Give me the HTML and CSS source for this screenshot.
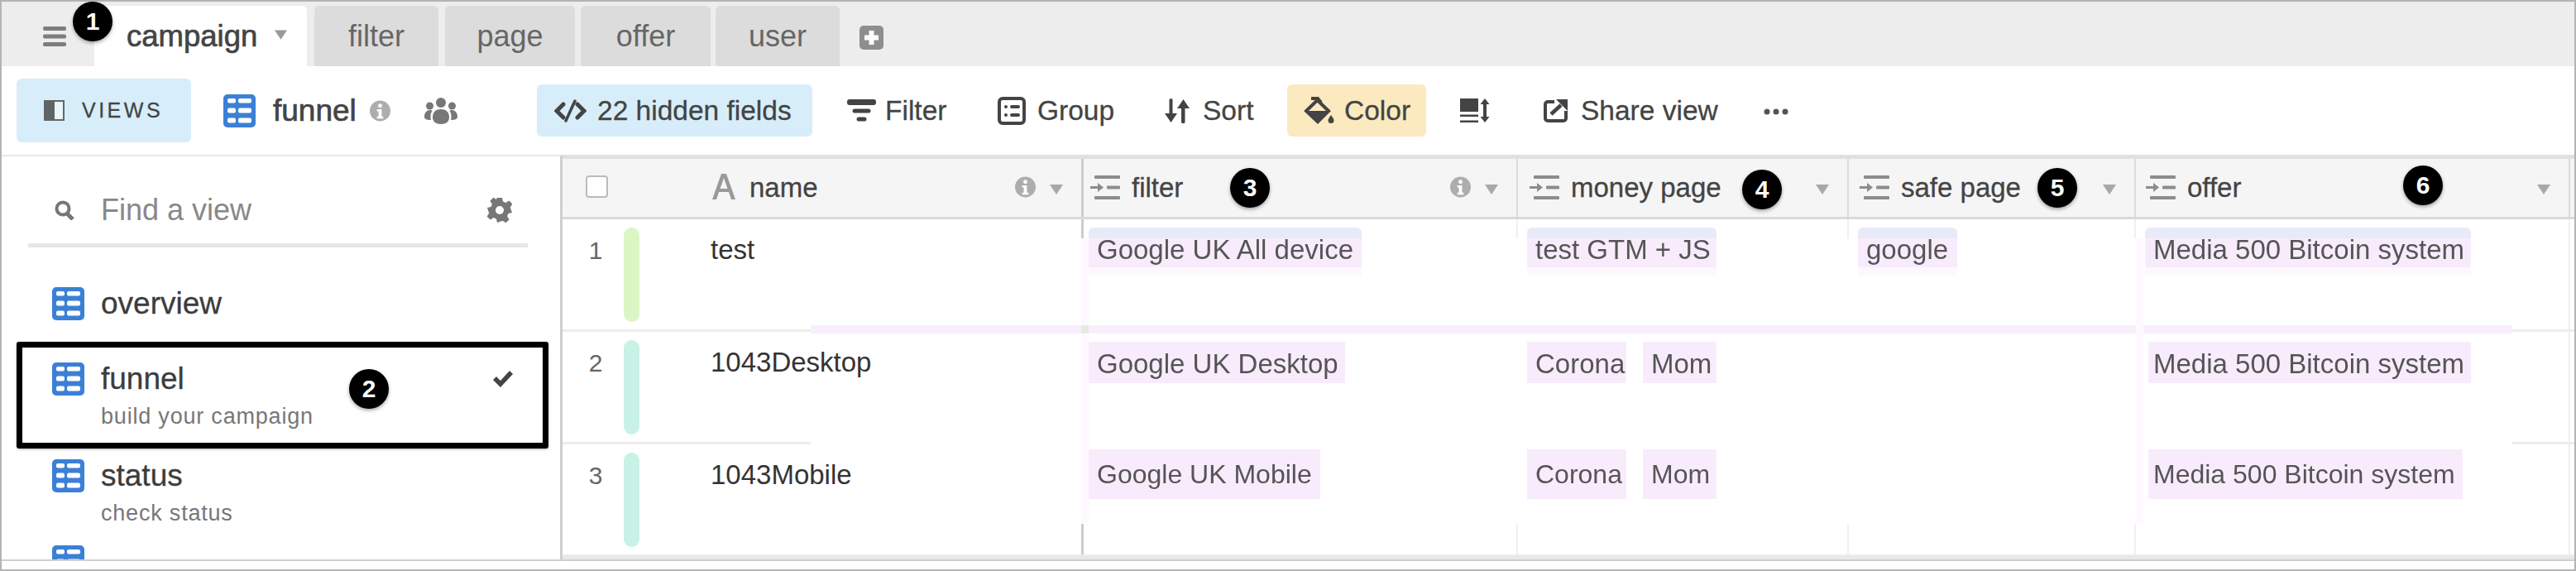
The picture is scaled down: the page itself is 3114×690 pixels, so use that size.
FILE: index.html
```html
<!DOCTYPE html>
<html lang="en">
<head>
    <meta charset="UTF-8">
    <meta name="viewport" content="width=device-width, initial-scale=1.0">
    <title>Campaign funnel</title>
    <link rel="stylesheet" href="styles.css">
</head>
<body>

<svg class="defs" width="0" height="0">
    <symbol id="grid" viewBox="0 0 39 40">
        <rect width="39" height="40" rx="5" fill="#3b80d6"/>
        <g fill="#fff">
            <rect x="5" y="5" width="10" height="5.500" rx="2"/><rect x="18" y="5" width="16" height="5.500" rx="2"/>
            <rect x="5" y="16.500" width="10" height="6" rx="2"/><rect x="18" y="16.500" width="16" height="6" rx="2"/>
            <rect x="5" y="28.500" width="10" height="6" rx="2"/><rect x="18" y="28.500" width="16" height="6" rx="2"/>
        </g>
    </symbol>
    <symbol id="lookup" viewBox="0 0 36 29">
        <g fill="#8c8c8c">
            <rect x="5" y="0" width="31" height="4" rx="1"/>
            <rect x="20" y="12.500" width="16" height="4" rx="1"/>
            <rect x="5" y="25" width="31" height="4" rx="1"/>
            <path d="M0 13h9V9l7 5.500-7 5.500v-4H0z"/>
        </g>
    </symbol>
    <symbol id="info" viewBox="0 0 26 26">
        <circle cx="13" cy="13" r="13" fill="#adadad"/>
        <circle cx="13" cy="6.500" r="2.500" fill="#fff"/>
        <path d="M9 11h6v9h2v2.500H9V20h2v-6.500H9z" fill="#fff"/>
    </symbol>
    <symbol id="caret" viewBox="0 0 16 12">
        <path d="M0 0h16L8 12z" fill="#a8a8a8"/>
    </symbol>
</svg>

<div class="window">

    <div class="tabbar">
        <svg class="menu-icon" viewBox="0 0 28 24">
            <rect y="0" width="28" height="5" rx="2"/><rect y="9.500" width="28" height="5" rx="2"/><rect y="19" width="28" height="5" rx="2"/>
        </svg>
        <div class="tab tab-active">campaign
            <svg class="tab-caret" viewBox="0 0 16 12"><path d="M0 0h16L8 12z"/></svg>
        </div>
        <div class="tab tab-filter">filter</div>
        <div class="tab tab-page">page</div>
        <div class="tab tab-offer">offer</div>
        <div class="tab tab-user">user</div>
        <div class="add-tab">
            <svg viewBox="0 0 29 29"><path d="M11.500 6h6v5.500H23v6h-5.500V23h-6v-5.500H6v-6h5.500z" fill="#fff"/></svg>
        </div>
        <span class="badge badge-1">1</span>
    </div>

    <div class="toolbar">
        <div class="views-btn">
            <svg class="views-icon" viewBox="0 0 25 25">
                <rect x="1" y="1" width="23" height="23" fill="#e8f5fc" stroke="#666" stroke-width="2"/>
                <rect x="1" y="1" width="12" height="23" fill="#5f6466"/>
            </svg>
            VIEWS
        </div>
        <svg class="view-icon"><use href="#grid"/></svg>
        <span class="view-name">funnel</span>
        <svg class="view-info"><use href="#info"/></svg>
        <svg class="people-icon" viewBox="0 0 40 32" fill="#777">
            <circle cx="20" cy="6" r="6"/><circle cx="6.500" cy="10" r="4.500"/><circle cx="33.500" cy="10" r="4.500"/>
            <path d="M10 24c0-7 4-10 10-10s10 3 10 10c0 5-4 8-10 8s-10-3-10-8z"/>
            <path d="M0 23c0-5 3-8 7-8 1 0 2 0 2.500 1-1.500 2-2 4-2 8 0 1 0 2 .5 3-5 0-8-1-8-4zM40 23c0-5-3-8-7-8-1 0-2 0-2.500 1 1.500 2 2 4 2 8 0 1 0 2-.5 3 5 0 8-1 8-4z"/>
        </svg>

        <div class="tool tool-hidden">
            <svg class="tool-icon icon-code" viewBox="0 0 39 28" fill="none" stroke="#444" stroke-width="5" stroke-linecap="round">
                <path d="M11 6l-8 8 8 8M28 6l8 8-8 8"/>
                <path d="M25 2L14 26" stroke-width="3.500"/>
            </svg>
            22 hidden fields
        </div>
        <div class="tool tool-filter">
            <svg class="tool-icon icon-filter" viewBox="0 0 35 27" fill="#444">
                <rect width="35" height="7" rx="3"/><rect x="6.500" y="11.500" width="22" height="5" rx="2.500"/><rect x="11.500" y="21.500" width="12" height="5" rx="2.500"/>
            </svg>
            Filter
        </div>
        <div class="tool tool-group">
            <svg class="tool-icon icon-group" viewBox="0 0 34 34">
                <rect x="2" y="2" width="30" height="30" rx="4" fill="none" stroke="#444" stroke-width="4"/>
                <g fill="#444"><circle cx="10" cy="12" r="2"/><rect x="15" y="10" width="12" height="4" rx="2"/><circle cx="10" cy="22" r="2"/><rect x="15" y="20" width="12" height="4" rx="2"/></g>
            </svg>
            Group
        </div>
        <div class="tool tool-sort">
            <svg class="tool-icon icon-sort" viewBox="0 0 30 30" fill="#444">
                <path d="M5.500 2a2 2 0 0 1 4 0v16h5.500L7.500 29 0 18h5.500z"/>
                <path d="M20 12h-5L22.500 1 30 12h-5.500v16a2.200 2.200 0 0 1-4.500 0z"/>
            </svg>
            Sort
        </div>
        <div class="tool tool-color">
            <svg class="tool-icon icon-color" viewBox="0 0 37 33">
                <path d="M0 17h33L17 33z" fill="#444"/>
                <path d="M2 18L16.500 4 31 18" fill="none" stroke="#444" stroke-width="4"/>
                <path d="M9 2h8l4 5" fill="none" stroke="#444" stroke-width="4"/>
                <path d="M33 22c2 3 3.500 4.500 3.500 6.500a3.500 3.500 0 0 1-7 0c0-2 1.500-3.500 3.500-6.500z" fill="#444"/>
            </svg>
            Color
        </div>
        <svg class="icon-height" viewBox="0 0 36 29" fill="#444">
            <rect width="22" height="16"/><rect y="19.500" width="22" height="2.500"/><rect y="26.500" width="22" height="2.500"/>
            <path d="M30 0l5.500 7H32v15h3.500L30 29l-5.500-7H28V7h-3.500z"/>
        </svg>
        <div class="tool tool-share">
            <svg class="tool-icon icon-share" viewBox="0 0 29 28">
                <path d="M13 3H5a3 3 0 0 0-3 3v17a3 3 0 0 0 3 3h19a3 3 0 0 0 3-3v-9" fill="none" stroke="#444" stroke-width="4"/>
                <path d="M15 0h14v14z" fill="#444"/>
                <path d="M9 18L21 7" stroke="#444" stroke-width="4.500"/>
            </svg>
            Share view
        </div>
        <svg class="icon-dots" viewBox="0 0 30 10" fill="#555">
            <circle cx="4" cy="5" r="3.500"/><circle cx="15" cy="5" r="3.500"/><circle cx="26" cy="5" r="3.500"/>
        </svg>
    </div>

    <div class="main">

        <aside class="sidebar">
            <div class="search">
                <svg class="search-icon" viewBox="0 0 24 24" fill="none" stroke="#777">
                    <circle cx="10" cy="10" r="7.500" stroke-width="4"/>
                    <path d="M15 16l7 7" stroke-width="5"/>
                </svg>
                <span class="search-text">Find a view</span>
                <svg class="gear-icon" viewBox="0 0 30 30">
                    <path fill="#777" fill-rule="evenodd" d="M12 0h6l1 4.500 3.300 1.400 4-2.500 4 4-2.500 4L29 15l1 3-4.500 1-1.400 3.300 2.500 4-4 4-4-2.500L15 29l-3 1-1-4.500-3.300-1.400-4 2.500-4-4 2.500-4L1 15l-1-3 4.500-1 1.400-3.300-2.500-4 4-4 4 2.500L11 1z M15 10a5 5 0 1 0 0 10 5 5 0 0 0 0-10z"/>
                </svg>
            </div>
            <div class="view-item view-plain">
                <svg class="item-icon"><use href="#grid"/></svg>
                <div class="item-name">overview</div>
            </div>
            <div class="view-item view-selected">
                <svg class="item-icon"><use href="#grid"/></svg>
                <div>
                    <div class="item-name">funnel</div>
                    <div class="item-sub">build your campaign</div>
                </div>
                <svg class="check-icon" viewBox="0 0 24 20"><path d="M0 11l4-4 5 5L20 0l4 4L9 20z" fill="#444"/></svg>
                <span class="badge badge-2">2</span>
            </div>
            <div class="view-item view-status">
                <svg class="item-icon"><use href="#grid"/></svg>
                <div>
                    <div class="item-name">status</div>
                    <div class="item-sub">check status</div>
                </div>
            </div>
            <div class="view-item view-more">
                <svg class="item-icon"><use href="#grid"/></svg>
            </div>
        </aside>

        <div class="grid">
            <div class="head-row">
                <div class="cell head-name">
                    <span class="checkbox"></span>
                    <svg class="a-icon" viewBox="0 0 28 31"><path d="M11 0h6l11 31h-5l-3-9H8l-3 9H0zM9.500 18h9L14 5z" fill="#999"/></svg>
                    <span class="head-label">name</span>
                    <svg class="head-info"><use href="#info"/></svg>
                    <svg class="head-caret"><use href="#caret"/></svg>
                </div>
                <div class="cell head-cell col-filter">
                    <svg class="lookup"><use href="#lookup"/></svg>
                    <span class="head-label">filter</span>
                    <svg class="head-info"><use href="#info"/></svg>
                    <svg class="head-caret"><use href="#caret"/></svg>
                    <span class="badge badge-3">3</span>
                </div>
                <div class="cell head-cell col-money">
                    <svg class="lookup"><use href="#lookup"/></svg>
                    <span class="head-label">money page</span>
                    <svg class="head-caret"><use href="#caret"/></svg>
                    <span class="badge badge-4">4</span>
                </div>
                <div class="cell head-cell col-safe">
                    <svg class="lookup"><use href="#lookup"/></svg>
                    <span class="head-label">safe page</span>
                    <svg class="head-caret"><use href="#caret"/></svg>
                    <span class="badge badge-5">5</span>
                </div>
                <div class="cell head-cell col-offer">
                    <svg class="lookup"><use href="#lookup"/></svg>
                    <span class="head-label">offer</span>
                    <svg class="head-caret"><use href="#caret"/></svg>
                    <span class="badge badge-6">6</span>
                </div>
            </div>

            <div class="row row-one">
                <div class="cell body-name">
                    <span class="row-num">1</span><span class="color-bar bar-green"></span><span class="row-title">test</span>
                </div>
                <div class="cell body-cell col-filter"><span class="chip chip-w1">Google UK All device</span></div>
                <div class="cell body-cell col-money"><span class="chip chip-w4">test GTM + JS</span></div>
                <div class="cell body-cell col-safe"><span class="chip chip-w7">google</span></div>
                <div class="cell body-cell col-offer"><span class="chip chip-w8">Media 500 Bitcoin system</span></div>
            </div>

            <div class="row row-two">
                <div class="cell body-name">
                    <span class="row-num">2</span><span class="color-bar bar-teal"></span><span class="row-title">1043Desktop</span>
                </div>
                <div class="cell body-cell col-filter"><span class="chip chip-w2">Google UK Desktop</span></div>
                <div class="cell body-cell col-money"><span class="chip chip-w5">Corona</span><span class="chip chip-w6">Mom</span></div>
                <div class="cell body-cell col-safe"></div>
                <div class="cell body-cell col-offer"><span class="chip chip-w10">Media 500 Bitcoin system</span></div>
            </div>

            <div class="row row-three">
                <div class="cell body-name">
                    <span class="row-num">3</span><span class="color-bar bar-teal"></span><span class="row-title">1043Mobile</span>
                </div>
                <div class="cell body-cell col-filter"><span class="chip chip-w3">Google UK Mobile</span></div>
                <div class="cell body-cell col-money"><span class="chip chip-w5">Corona</span><span class="chip chip-w6">Mom</span></div>
                <div class="cell body-cell col-safe"></div>
                <div class="cell body-cell col-offer"><span class="chip chip-w9">Media 500 Bitcoin system</span></div>
            </div>

            <!-- white and pink patches laid over the grid lines in the source picture -->
            <div class="patch"></div>
            <div class="patch-band"></div>
            <div class="patch-line patch-line-filter"></div>
            <div class="patch-line patch-line-offer"></div>
            <div class="patch-joint"></div>
        </div>
    </div>
</div>

</body>
</html>
```
FILE: styles.css
```css
* {
    box-sizing: border-box;
}

html, body {
    margin: 0;
    height: 100%;
    overflow: hidden;
}

body {
    font-family: "Liberation Sans", Arial, sans-serif;
    color: #444;
    background-color: #fff;
}

.defs {
    position: absolute;
}

.window {
    height: 690px;
    border: 2px solid #b4b4b4;
    display: flex;
    flex-direction: column;
    background-color: #fff;
}

/* tabs */
.tabbar {
    position: relative;
    height: 78px;
    flex: none;
    background-color: #ededed;
    display: flex;
    align-items: flex-end;
    padding-left: 50px;
}

.menu-icon {
    width: 28px;
    height: 24px;
    fill: #7d7d7d;
    margin: 0 34px 24px 0;
}

.tab {
    height: 73px;
    border-radius: 6px 6px 0 0;
    background-color: #dcdcdc;
    color: #666;
    font-size: 36px;
    display: flex;
    align-items: center;
    justify-content: center;
}

.tab-active {
    width: 257px;
    margin-right: 9px;
    background-color: #fff;
    color: #444;
    font-size: 36.500px;
    -webkit-text-stroke: 0.7px #444;
    justify-content: flex-start;
    padding-left: 39px;
}

.tab-caret {
    width: 15px;
    height: 12px;
    fill: #999;
    margin: 0 0 4px 21px;
}

.tab-filter { width: 150px; margin-right: 8px; }
.tab-page { width: 157px; margin-right: 7px; }
.tab-offer { width: 157px; margin-right: 6px; }
.tab-user { width: 150px; margin-right: 24px; }

.add-tab {
    width: 29px;
    height: 29px;
    border-radius: 5px;
    background-color: #8e8e8e;
    margin-bottom: 20px;
}

.add-tab svg {
    display: block;
    width: 29px;
    height: 29px;
}

/* numbered callouts */
.badge {
    position: absolute;
    width: 48px;
    height: 48px;
    border-radius: 50%;
    background-color: #000;
    color: #fff;
    font-size: 30px;
    font-weight: bold;
    display: flex;
    align-items: center;
    justify-content: center;
    box-shadow: 0 2px 4px rgba(0, 0, 0, 0.35);
    -webkit-text-stroke: 0;
}

.badge-1 { left: 86px; top: 0; }
.badge-2 { left: 395px; top: 26px; }
.badge-3 { left: 177px; top: 11px; }
.badge-4 { left: 271px; top: 13px; }
.badge-5 { left: 228px; top: 11px; }
.badge-6 { left: 323px; top: 8px; }

/* toolbar */
.toolbar {
    height: 107px;
    flex: none;
    display: flex;
    align-items: center;
    padding-left: 18px;
    font-size: 33.500px;
    -webkit-text-stroke: 0.3px #444;
    background-color: #fff;
}

.views-btn {
    width: 211px;
    height: 77px;
    margin-right: 39px;
    background-color: #d7eefa;
    border-radius: 6px;
    display: flex;
    align-items: center;
    padding-left: 33px;
    font-size: 25px;
    letter-spacing: 3.500px;
}

.views-icon {
    width: 25px;
    height: 25px;
    margin-right: 21px;
}

.view-icon {
    width: 39px;
    height: 40px;
    margin-right: 21px;
}

.view-name {
    width: 102px;
    font-size: 37px;
    -webkit-text-stroke: 0.7px #444;
    margin-right: 15px;
}

.view-info {
    width: 25px;
    height: 26px;
    margin-right: 41px;
}

.people-icon {
    width: 40px;
    height: 32px;
    margin-right: 96px;
}

.tool {
    height: 63px;
    display: flex;
    align-items: center;
    border-radius: 6px;
    white-space: nowrap;
}

.tool-icon {
    flex: none;
}

.tool-hidden {
    width: 333px;
    padding-left: 21px;
    background-color: #d7eefa;
    margin-right: 42px;
}

.icon-code { width: 39px; height: 28px; margin-right: 13px; }

.tool-filter { width: 121px; margin-right: 61px; }
.icon-filter { width: 35px; height: 27px; margin-right: 11px; }

.tool-group { width: 139px; margin-right: 63px; }
.icon-group { width: 34px; height: 34px; margin-right: 14px; }

.tool-sort { width: 108px; margin-right: 40px; }
.icon-sort { width: 30px; height: 30px; margin-right: 16px; }

.tool-color {
    width: 168px;
    padding-left: 20px;
    background-color: #fbeabf;
    margin-right: 41px;
}

.icon-color { width: 37px; height: 33px; margin-right: 12px; }

.icon-height {
    width: 36px;
    height: 29px;
    margin-right: 65px;
}

.tool-share { width: 207px; margin-right: 59px; }
.icon-share { width: 29px; height: 28px; margin-right: 16px; }

.icon-dots {
    width: 30px;
    height: 10px;
    margin-top: 3px;
}

/* sidebar */
.main {
    height: 491px;
    flex: none;
    display: flex;
    border-bottom: 2px solid #cfcfcf;
}

.sidebar {
    width: 678px;
    flex: none;
    height: 100%;
    border-right: 3px solid #cfcfcf;
    overflow: hidden;
    background-color: #fff;
    border-top: 2px solid #e8e8e8;
}

.search {
    display: flex;
    align-items: center;
    height: 110px;
    margin: 0 39px 0 32px;
    padding: 24px 19px 0 32px;
    border-bottom: 5px solid #e6e6e6;
    color: #888;
}

.search-icon {
    width: 24px;
    height: 24px;
    margin-right: 32px;
}

.search-text {
    font-size: 36px;
    flex: 1;
}

.gear-icon {
    width: 30px;
    height: 30px;
}

.view-item {
    position: relative;
    display: flex;
    padding-left: 61px;
}

.view-plain {
    height: 114px;
    padding-top: 48px;
}

.view-selected {
    height: 129px;
    width: 643px;
    margin-left: 18px;
    padding: 18px 0 0 36px;
    border: 7px solid #000;
    border-radius: 3px;
    box-shadow: 0 1px 3px rgba(0, 0, 0, 0.3);
}

.view-status {
    height: 117px;
    padding-top: 13px;
}

.item-icon {
    width: 39px;
    height: 40px;
    margin-right: 20px;
    flex: none;
}

.item-name {
    font-size: 37px;
    line-height: 40px;
    color: #3c3c3c;
    -webkit-text-stroke: 0.3px #3c3c3c;
}

.item-sub {
    font-size: 27px;
    line-height: 30px;
    margin-top: 10px;
    color: #777;
    letter-spacing: 0.8px;
}

.check-icon {
    position: absolute;
    left: 569px;
    top: 28px;
    width: 24px;
    height: 20px;
}

/* grid */
.grid {
    position: relative;
    flex: 1;
    height: 100%;
    overflow: hidden;
    border-top: 5px solid #e0e0e0;
    border-bottom: 4px solid #e8e8e8;
}

.head-row {
    display: flex;
    height: 73px;
    background-color: #f5f5f5;
    border-bottom: 3px solid #dadada;
}

.row {
    display: flex;
    height: 136px;
    border-bottom: 3px solid #ececec;
}

.cell {
    position: relative;
    flex: none;
    height: 100%;
    display: flex;
    align-items: flex-start;
}

.head-name,
.body-name {
    width: 630px;
    border-right: 3px solid #cccccc;
}

.head-name {
    padding: 20px 0 0 28px;
}

.body-name {
    padding: 10px 0 0 28px;
}

.col-filter { width: 525px; }
.col-money { width: 400px; }
.col-safe { width: 347px; }
.col-offer { width: 525px; }

.head-cell {
    border-right: 2px solid #dcdcdc;
    padding-top: 20px;
}

.head-cell.col-filter { padding-left: 8px; }
.head-cell.col-money { padding-left: 14px; }
.head-cell.col-safe { padding-left: 13px; }
.head-cell.col-offer { padding-left: 12px; }

.body-cell {
    border-right: 2px solid #f0f0f0;
    padding: 10px 0 0 11px;
}

.body-cell.col-filter {
    padding-left: 6px;
}

.checkbox {
    width: 27px;
    height: 27px;
    margin-right: 126px;
    background-color: #fff;
    border: 2px solid #bbb;
    border-radius: 4px;
}

.a-icon {
    width: 28px;
    height: 31px;
    margin: -2px 17px 0 0;
}

.lookup {
    width: 36px;
    height: 29px;
    margin-right: 14px;
}

.head-label {
    font-size: 33px;
    line-height: 36px;
    margin-top: -3px;
    color: #444;
    -webkit-text-stroke: 0.3px #444;
}

.head-info {
    position: absolute;
    top: 21px;
    right: 55px;
    width: 25px;
    height: 26px;
}

.head-caret {
    position: absolute;
    top: 31px;
    right: 22px;
    width: 16px;
    height: 12px;
}

.row-num {
    width: 24px;
    margin-top: 13px;
    font-size: 30px;
    line-height: 30px;
    color: #666;
    text-align: center;
}

.color-bar {
    width: 19px;
    height: 114px;
    border-radius: 10px;
    margin: 0 86px 0 22px;
}

.bar-green { background-color: #dcf5c4; }
.bar-teal { background-color: #c8f2e6; }

.row-title {
    position: relative;
    z-index: 2;
    margin-top: 7px;
    font-size: 33px;
    line-height: 40px;
    color: #333;
    white-space: nowrap;
}

/* redacted chips, the source picture has these pixelated */
.chip {
    position: relative;
    z-index: 2;
    margin-right: 20px;
    padding-left: 10px;
    background-color: #f8ecfc;
    color: #555;
    font-size: 33px;
    white-space: nowrap;
    filter: blur(0.7px);
}

.row-one .chip {
    height: 48px;
    padding-top: 5px;
    line-height: 43px;
    border-radius: 6px 6px 0 0;
    background: linear-gradient(#e8eaf8 13px, #f8ecfc 13px);
    box-shadow: 0 10px 0 #fdf8fe;
}

.row-two .chip {
    height: 50px;
    padding-top: 4px;
    line-height: 46px;
    margin-top: 2px;
}

.row-three .chip {
    height: 60px;
    font-size: 32px;
    line-height: 60px;
    margin-top: -4px;
}

.chip-w1 { width: 330px; }
.chip-w2 { width: 310px; }
.chip-w3 { width: 280px; }
.chip-w4 { width: 229px; }
.chip-w5 { width: 120px; }
.chip-w6 { width: 89px; margin-right: 0; }
.chip-w7 { width: 120px; }
.chip-w8 { width: 394px; }
.chip-w9 { width: 380px; margin-left: 4px; padding-left: 6px; }
.chip-w10 { width: 390px; margin-left: 4px; padding-left: 6px; }

.patch {
    position: absolute;
    z-index: 1;
    left: 300px;
    top: 96px;
    width: 2057px;
    height: 345px;
    background-color: #fff;
}

.patch-band {
    position: absolute;
    z-index: 1;
    left: 300px;
    top: 201px;
    width: 2057px;
    height: 10px;
    background-color: #f9effc;
}

.patch-line {
    position: absolute;
    z-index: 1;
    top: 96px;
    width: 9px;
    height: 345px;
    background-color: #fef9fe;
}

.patch-line-filter { left: 627px; }
.patch-line-offer { left: 1902px; }

.patch-joint {
    position: absolute;
    z-index: 1;
    left: 627px;
    top: 201px;
    width: 9px;
    height: 10px;
    background-color: #e6ebe0;
}
```
